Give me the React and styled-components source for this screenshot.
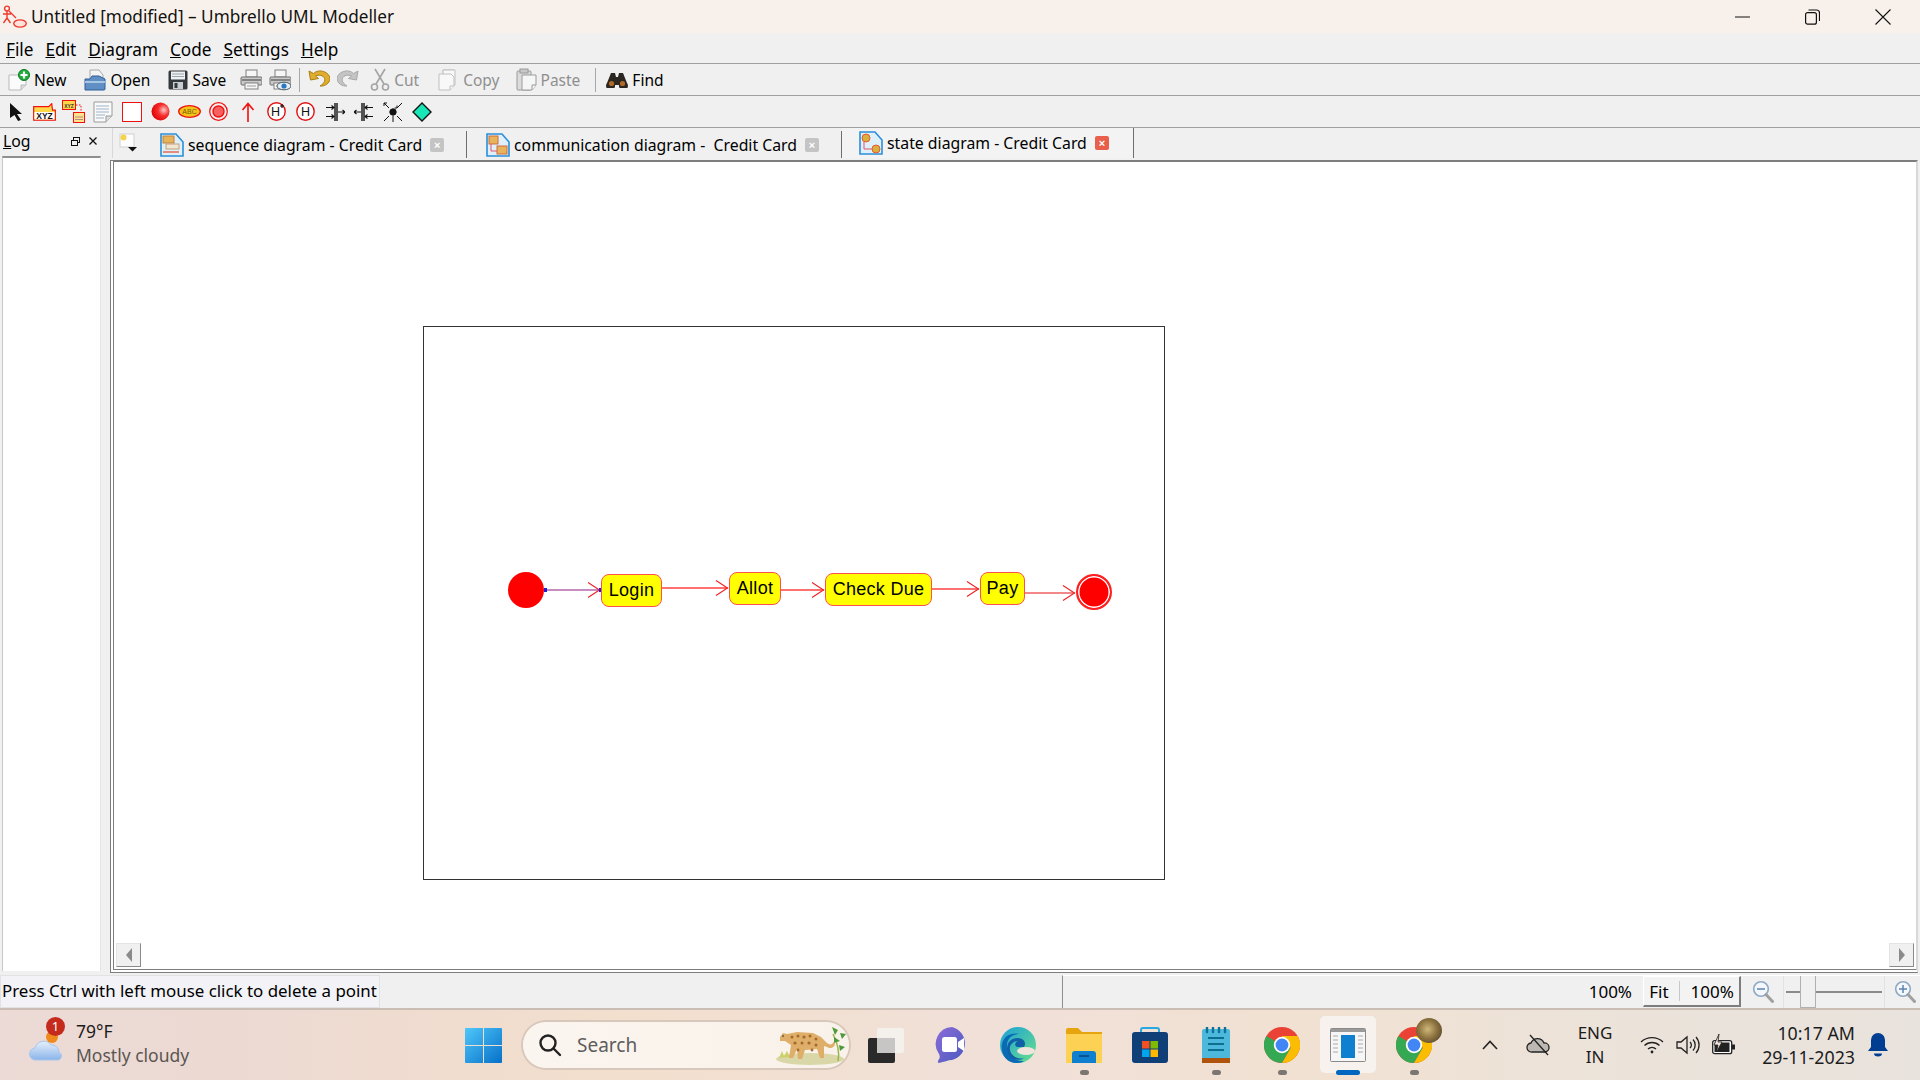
import React from 'react'
import styled, { createGlobalStyle } from 'styled-components'

const GlobalStyle = createGlobalStyle`
  html, body { margin: 0; padding: 0; background: #f0f0f0; }
  #root { width: 1920px; height: 1080px; overflow: hidden; }
  * { box-sizing: border-box; }
  svg { display: block; flex: none; }
`

const Page = styled.div`
  width: 1920px;
  height: 1080px;
  display: flex;
  flex-direction: column;
  font-family: "Noto Sans", sans-serif;
  font-size: 15.8px;
  color: #000;
  background: #f0f0f0;
`

/* title bar */
const TitleBar = styled.div`
  height: 33px;
  flex: none;
  display: flex;
  align-items: center;
  background: #f8f1eb;
  padding-left: 2px;
`
const TitleText = styled.span`
  font-size: 17.2px;
  margin-left: 4px;
  color: #111;
`
const WindowButtons = styled.div`
  margin-left: auto;
  display: flex;
  align-items: center;
  padding-right: 29px;
  gap: 55px;
`

/* menu + toolbars */
const MenuBar = styled.div`
  height: 31px;
  flex: none;
  display: flex;
  align-items: center;
  gap: 12px;
  padding: 2px 0 0 6px;
  border-bottom: 1px solid #a0a0a0;
  font-size: 17.2px;
`
const Bar = styled.div`
  height: 32px;
  flex: none;
  display: flex;
  align-items: center;
  padding-left: ${p => p.$pad || 0}px;
  border-bottom: 1px solid #a0a0a0;
  font-size: 15.5px;
`
const ToolButton = styled.div`
  display: flex;
  align-items: center;
  gap: 4px;
  margin-right: ${p => p.$after ?? 18}px;
  color: ${p => (p.$off ? '#8f8f8f' : '#000')};
`
const ToolSep = styled.div`
  width: 1px;
  height: 24px;
  background: #a8a8a8;
  margin: 0 ${p => p.$right ?? 8}px 0 0;
`
const IconCell = styled.div`
  width: 29px;
  height: 30px;
  display: flex;
  align-items: center;
  justify-content: center;
`

/* body */
const Main = styled.div`
  flex: 1;
  min-height: 0;
  display: flex;
`
const LogDock = styled.div`
  width: 102px;
  flex: none;
  display: flex;
  flex-direction: column;
`
const LogHead = styled.div`
  height: 28px;
  display: flex;
  align-items: center;
  padding: 0 5px 2px 3px;
`
const LogActions = styled.div`
  margin-left: auto;
  display: flex;
  align-items: center;
  gap: 9px;
`
const LogBody = styled.div`
  flex: 1;
  margin: 0 1px 2px 2px;
  background: #fff;
  border-top: 2px solid #8f8f8f;
  border-left: 1px solid #c8c8c8;
  border-right: 1px solid #e4e4e4;
`
const Work = styled.div`
  flex: 1;
  min-width: 0;
  display: flex;
  flex-direction: column;
  margin-left: 10px;
  padding-right: 2px;
`
const TabStrip = styled.div`
  height: 32px;
  flex: none;
  display: flex;
  align-items: flex-end;
  padding-bottom: 2px;
`
const TabMenu = styled.div`
  width: 32px;
  height: 30px;
  display: flex;
  align-items: center;
  justify-content: center;
  border-left: 1px solid #d8d8d8;
`
const Tab = styled.div`
  width: ${p => p.$w}px;
  height: ${p => (p.$active ? 30 : 27)}px;
  display: flex;
  align-items: center;
  padding-left: ${p => p.$pad}px;
  gap: 4px;
  border-right: 1px solid #6e6e6e;
  background: ${p => (p.$active ? '#f3f3f3' : '#f0f0f0')};
  white-space: pre;
`
const TabClose = styled.div`
  width: 14px;
  height: 14px;
  margin-left: 4px;
  border-radius: 2px;
  background: ${p => (p.$active ? '#e8604c' : '#c4c4c4')};
  color: #fff;
  font: bold 11px/14px "Liberation Sans", sans-serif;
  text-align: center;
`
const Canvas = styled.div`
  flex: 1;
  min-height: 0;
  margin-left: -2px;
  display: flex;
  flex-direction: column;
  background: #fff;
  border-top: 2px solid #7d7d7d;
  border-right: 2px solid #d8d8d8;
  border-left: 4px double #7d7d7d;
  border-bottom: 4px double #7d7d7d;
`
const Viewport = styled.div`
  flex: 1;
  min-height: 0;
  padding: 164px 0 0 309px;
`
const ScrollRow = styled.div`
  height: 26px;
  flex: none;
  display: flex;
  justify-content: space-between;
  padding: 0 2px 1px 2px;
`
const ScrollButton = styled.div`
  width: 25px;
  height: 24px;
  background: #f0f0f0;
  border: 1px solid #e4e4e4;
  border-right: 1px solid #8a8a8a;
  border-bottom: 1px solid #8a8a8a;
  display: flex;
  align-items: center;
  justify-content: center;
`

/* the state diagram: a free canvas */
const DiagramFrame = styled.div`
  position: relative;
  width: 742px;
  height: 554px;
  border: 1px solid #333;
  font-family: "Liberation Sans", sans-serif;
`
const Wires = styled.svg`
  position: absolute;
  left: 0;
  top: 0;
`
const StateNode = styled.div`
  position: absolute;
  left: ${p => p.$x}px;
  top: ${p => p.$y}px;
  width: ${p => p.$w}px;
  height: 33px;
  border: 1.5px solid #ff5050;
  border-radius: 8px;
  background: #ffff00;
  font-size: 18px;
  letter-spacing: .3px;
  line-height: 31px;
  text-align: center;
`
const InitialDot = styled.div`
  position: absolute;
  left: ${p => p.$x}px;
  top: ${p => p.$y}px;
  width: 36px;
  height: 36px;
  border-radius: 50%;
  background: #ff0000;
`
const FinalDot = styled(InitialDot)`
  border: 2px solid #ff2020;
  background: #ff0000;
  box-shadow: inset 0 0 0 1.5px #fff;
`

/* status bar */
const StatusBar = styled.div`
  height: 35px;
  flex: none;
  display: flex;
  align-items: center;
  padding-top: 1px;
  background: #f0f0f0;
  font-size: 17px;
`
const StatusMessage = styled.div`
  width: 380px;
  height: 33px;
  line-height: 29px;
  padding-left: 1px;
  background: #f3f3f7;
  border: 1px solid #e2e2e2;
  font-size: 16.9px;
  white-space: nowrap;
`
const StatusFill = styled.div`
  flex: 1;
  height: 33px;
  margin-left: 682px;
  border-left: 1px solid #8f8f8f;
  border-top: 1px solid #fff;
  display: flex;
  align-items: center;
  justify-content: flex-end;
  padding-right: 4px;
`
const ZoomValue = styled.span`
  margin-right: 11px;
`
const ZoomBox = styled.div`
  width: 98px;
  height: 31px;
  display: flex;
  align-items: center;
  justify-content: space-around;
  background: #f3f3f3;
  border-top: 1px solid #fff;
  border-left: 1px solid #fff;
  border-right: 2px solid #7d7d7d;
  border-bottom: 2px solid #7d7d7d;
  flex: none;
  margin-right: 11px;
`
const ZoomDivider = styled.div`
  width: 1px;
  height: 20px;
  background: #c8c8c8;
`
const SliderWell = styled.div`
  position: relative;
  width: 102px;
  height: 32px;
  margin: 0 9px 0 9px;
  border-left: 1px solid #e2e2e2;
  border-right: 1px solid #e2e2e2;
  display: flex;
  align-items: center;
`
const SliderTrack = styled.div`
  width: 100%;
  height: 2px;
  margin: 0 2px;
  background: #8a8a8a;
`
const SliderThumb = styled.div`
  position: absolute;
  left: 16px;
  top: 0;
  width: 16px;
  height: 32px;
  background: #f0f0f0;
  border: 1px solid #b0b0b0;
  border-top: 0;
`

/* taskbar */
const Taskbar = styled.div`
  height: 72px;
  flex: none;
  display: flex;
  align-items: center;
  border-top: 2px solid #c9bdb4;
  background: linear-gradient(90deg, #ecdad6 0%, #ecd9d2 12%, #f3dfcd 32%, #f0e0d8 52%, #f1e1d2 68%, #ebe3da 85%, #e9e3dd 100%);
`
const Weather = styled.div`
  position: relative;
  width: 450px;
  height: 100%;
  flex: none;
  display: flex;
  align-items: center;
  padding-left: 29px;
  gap: 11px;
`
const WeatherBadge = styled.div`
  position: absolute;
  left: 46px;
  top: 7px;
  width: 19px;
  height: 19px;
  border-radius: 50%;
  background: #c42b1c;
  color: #fff;
  font-size: 13px;
  line-height: 19px;
  text-align: center;
`
const WeatherText = styled.div`
  display: flex;
  flex-direction: column;
  font-size: 17.5px;
  line-height: 24px;
  margin-top: -4px;
  color: #1c1c1c;
`
const WeatherSub = styled.span`
  color: #5a5652;
`
const Slot = styled.div`
  position: relative;
  width: 66px;
  height: 100%;
  flex: none;
  display: flex;
  align-items: center;
  justify-content: center;
`
const ActiveBox = styled.div`
  position: absolute;
  left: 5px;
  top: 6px;
  width: 56px;
  height: 57px;
  border-radius: 5px;
  background: #f7f2ee;
`
const ActiveIcon = styled.div`
  position: relative;
`
const RunDot = styled.div`
  position: absolute;
  left: 50%;
  bottom: 5px;
  width: ${p => (p.$active ? 24 : 9)}px;
  height: 5px;
  margin-left: ${p => (p.$active ? -12 : -4)}px;
  border-radius: 3px;
  background: ${p => (p.$active ? '#0067c0' : '#7b7671')};
`
const SearchPill = styled.div`
  width: 326px;
  height: 46px;
  flex: none;
  margin: 0 4px 0 7px;
  display: flex;
  align-items: center;
  padding: 0 0 0 15px;
  gap: 15px;
  border-radius: 23px;
  background: linear-gradient(90deg, #fbf5ef, #f9f2ea);
  box-shadow: 0 0 0 2px #d8c8bc;
  font-size: 19px;
  color: #5d5d5d;
`
const SearchArt = styled.div`
  margin-left: auto;
  margin-right: 1px;
`
const Tray = styled.div`
  margin-left: ${p => p.$ml || 0}px;
  width: ${p => p.$w}px;
  height: 100%;
  flex: none;
  display: flex;
  align-items: center;
  justify-content: center;
`
const LangBox = styled.div`
  font-size: 17px;
  line-height: 24px;
  text-align: center;
  color: #1c1c1c;
`
const Clock = styled.div`
  width: 113px;
  flex: none;
  font-size: 17.8px;
  line-height: 24px;
  text-align: right;
  color: #1c1c1c;
  white-space: nowrap;
`

/* ---- icons ---- */
const AppLogo = () => (
  <svg width="25" height="24" viewBox="0 0 25 24" fill="none" stroke="#f03a2e" strokeWidth="1.4">
    <circle cx="5" cy="3.5" r="2.4" />
    <path d="M5 6v7M1 9h8M5 13l-3.5 5M5 13l3.5 5M7 6l7 7" />
    <ellipse cx="18" cy="18.5" rx="6.3" ry="3.6" fill="#fde3dc" />
  </svg>
)
const MinIcon = () => <svg width="15" height="15"><path d="M0 8h15" stroke="#111" strokeWidth="1" /></svg>
const RestoreIcon = () => (
  <svg width="15" height="16" fill="none" stroke="#111" strokeWidth="1.2">
    <rect x=".6" y="3.6" width="10.8" height="11.6" rx="2" />
    <path d="M3.5 1h8a3 3 0 0 1 3 3v8" />
  </svg>
)
const CloseIcon = () => <svg width="16" height="16"><path d="M.5.5l15 15M15.5.5l-15 15" stroke="#111" strokeWidth="1.1" /></svg>

const NewIcon = () => (
  <svg width="22" height="22">
    <path d="M1 6h12l5 3v7l-5 5H1z" fill="#fbfbfb" stroke="#b9b9b9" />
    <path d="M13 21v-5h5" fill="#ddd" stroke="#b9b9b9" />
    <circle cx="16" cy="6" r="5.5" fill="#1fae3c" stroke="#0b7a22" />
    <path d="M16 2.5v7M12.5 6h7" stroke="#fff" strokeWidth="2.2" />
  </svg>
)
const OpenIcon = () => (
  <svg width="22" height="22">
    <path d="M6 1h9l4 5v8H6z" fill="#f4f4f4" stroke="#a8a8a8" />
    <path d="M1 10h5l2-3h7l6 3v10a1 1 0 0 1-1 1H1z" fill="#5f8fc4" stroke="#2f5f95" />
    <path d="M1 13h20" stroke="#a9c6e4" strokeWidth="2" />
  </svg>
)
const SaveIcon = () => (
  <svg width="20" height="20">
    <rect x=".5" y=".5" width="19" height="19" rx="1.5" fill="#34383d" />
    <rect x="3" y="1.5" width="14" height="8" fill="#eef1f4" />
    <path d="M4 4h12M4 6.500h12" stroke="#9aa4ad" />
    <rect x="5" y="12" width="10" height="7" fill="#c6ccd2" />
    <rect x="6.500" y="13" width="3" height="5" fill="#34383d" />
  </svg>
)
const PrintIcon = ({ eye }) => (
  <svg width="22" height="22">
    <rect x="6" y="1" width="11" height="7" fill="#f6f6f6" stroke="#808080" />
    <rect x="1" y="8" width="21" height="8" rx="1" fill="#c9c9c9" stroke="#707070" />
    <path d="M2 11h19" stroke="#6a6a6a" strokeWidth="1.5" />
    <rect x="5" y="14" width="13" height="6" fill="#f6f6f6" stroke="#808080" />
    <path d="M7 17h9" stroke="#9b9b9b" />
    {eye && (
      <g>
        <ellipse cx="15" cy="17" rx="7" ry="3.800" fill="#e9eef3" stroke="#4a5a6a" />
        <circle cx="15" cy="17" r="2.600" fill="#2a79c0" />
      </g>
    )}
  </svg>
)
const UndoIcon = ({ color = '#e0ad2e', edge = '#a87f16', flip }) => (
  <svg width="22" height="20" viewBox="0 0 22 20">
    <g transform={flip ? 'translate(22 0) scale(-1 1)' : undefined}>
      <path d="M1 1l1.500 9 8-1.500-3-2.500c3-1.500 8-1 9 2.500 1 3-1.500 6-4.500 7.500 5 .5 10-3 10-7.500C21.500 2 11 -2 5.500 3.500z" fill={color} stroke={edge} />
    </g>
  </svg>
)
const CutIcon = () => (
  <svg width="20" height="23" fill="none" stroke="#a4a4a4">
    <path d="M5 1l9 15M15 1L6 16" strokeWidth="1.600" />
    <circle cx="4.500" cy="19" r="3" strokeWidth="1.600" />
    <circle cx="15.500" cy="19" r="3" strokeWidth="1.600" />
  </svg>
)
const CopyIcon = () => (
  <svg width="21" height="22" fill="#f8f8f8" stroke="#c0c0c0">
    <path d="M5 1h11v3h-11z" />
    <path d="M5 1h12v15H5z" />
    <path d="M1 5h12l3 3v9l-4 4H1z" />
    <path d="M12 21v-4h4" />
  </svg>
)
const PasteIcon = () => (
  <svg width="21" height="23" fill="#f6f6f6" stroke="#9a9a9a">
    <rect x="1" y="3" width="14" height="19" rx="1" fill="#dcdcdc" />
    <rect x="4" y="1" width="8" height="4" fill="#c8c8c8" />
    <path d="M6 7h14v10l-4 5H6z" />
    <path d="M16 22v-5h4" />
  </svg>
)
const FindIcon = () => (
  <svg width="22" height="16">
    <path d="M5 1h4l1 4h2l1-4h4l4 10a4.500 4.500 0 1 1-8 2h-4a4.500 4.500 0 1 1-8-2z" fill="#2c2620" />
    <circle cx="5.500" cy="11.500" r="2.600" fill="#b06a28" />
    <circle cx="16.500" cy="11.500" r="2.600" fill="#b06a28" />
  </svg>
)

const CursorIcon = () => (
  <svg width="14" height="18"><path d="M1 0l12 11H8l4 6-3 1-3.500-6L1 15z" fill="#111" /></svg>
)
const XyzIcon = () => (
  <svg width="23" height="18">
    <path d="M.7 3.700h15l3-3 .8 6.500 2.800 0v10H.7z" fill="#ffd84a" stroke="#f01010" strokeWidth="1.200" />
    <rect x="1.500" y="9" width="20" height="7.500" fill="#fff" />
    <text x="11.500" y="15.500" textAnchor="middle" fontFamily="Liberation Sans" fontWeight="700" fontSize="8.500" fill="#111">XYZ</text>
  </svg>
)
const SubStateIcon = () => (
  <svg width="23" height="23">
    <rect x=".5" y=".5" width="13" height="9" fill="#ffd84a" stroke="#f01010" />
    <text x="7" y="8" textAnchor="middle" fontFamily="Liberation Sans" fontWeight="700" fontSize="5" fill="#333">XYZ</text>
    <path d="M14 5h5v8" fill="none" stroke="#f01010" strokeDasharray="1.500 1.500" />
    <rect x="11.500" y="12.500" width="11" height="10" fill="#ffe38a" stroke="#f01010" />
    <path d="M13 17h8M13 19.500h8" stroke="#b88" />
  </svg>
)
const NoteIcon = () => (
  <svg width="20" height="22">
    <path d="M1 1h18v14l-6 6H1z" fill="#fafafa" stroke="#9a9a9a" />
    <path d="M13 21v-6h6" fill="#ddd" stroke="#9a9a9a" />
    <path d="M3 5h13M3 8h13M3 11h13M3 14h9M3 17h8" stroke="#9fb3c8" />
  </svg>
)
const SquareIcon = () => <svg width="20" height="20"><rect x=".5" y=".5" width="19" height="19" fill="#fff" stroke="#f01010" /></svg>
const RoundIcon = () => (
  <svg width="19" height="19">
    <defs>
      <radialGradient id="rg" cx=".68" cy=".42" r=".7">
        <stop offset="0" stopColor="#ffc8c8" />
        <stop offset=".45" stopColor="#f53030" />
        <stop offset="1" stopColor="#e00000" />
      </radialGradient>
    </defs>
    <circle cx="9.500" cy="9.500" r="9" fill="url(#rg)" />
  </svg>
)
const AbcIcon = () => (
  <svg width="23" height="13">
    <ellipse cx="11.500" cy="6.500" rx="10.800" ry="5.800" fill="#f2c418" stroke="#f01010" strokeWidth="1.300" />
    <text x="11.500" y="9" textAnchor="middle" fontFamily="Liberation Sans" fontSize="7" fill="#7a5a00">ABC</text>
  </svg>
)
const TargetIcon = () => (
  <svg width="19" height="19" fill="none" stroke="#f01010">
    <circle cx="9.500" cy="9.500" r="8.800" strokeWidth="1.200" />
    <circle cx="9.500" cy="9.500" r="5.500" fill="#f76060" strokeWidth="1.400" />
  </svg>
)
const UpIcon = () => (
  <svg width="14" height="20" fill="none" stroke="#f01010" strokeWidth="1.600">
    <path d="M7 20V2M1.500 8L7 1.500 12.500 8" />
  </svg>
)
const HistoryIcon = ({ deep }) => (
  <svg width="19" height="19">
    <circle cx="9.500" cy="9.500" r="8.700" fill="#fff" stroke="#e01010" strokeWidth="1.400" />
    <text x={deep ? 8.500 : 9.500} y="14" textAnchor="middle" fontFamily="Liberation Sans" fontSize="12.500" fill="#111">H</text>
    {deep && <path d="M15 2v4M13 4h4" stroke="#111" strokeWidth="1.200" />}
  </svg>
)
const ForkIcon = ({ flip }) => (
  <svg width="20" height="18" fill="none" stroke="#111" strokeWidth="1.100">
    <g transform={flip ? 'translate(20 0) scale(-1 1)' : undefined}>
      <path d="M10 0v18M12 0v18" strokeWidth="1.400" />
      <path d="M1 4.500h8M1 13.500h8M6.500 2.500l2.500 2-2.500 2M6.500 11.500l2.500 2-2.500 2M13 9h7M17.500 7l2.500 2-2.500 2" />
    </g>
  </svg>
)
const JunctionIcon = () => (
  <svg width="20" height="20" fill="none" stroke="#111">
    <circle cx="10" cy="10" r="3.200" fill="#111" />
    <path d="M1 1l5 5M19 1l-5 5M1 19l5-5M19 19l-5-5M10 14v6M1 1h3M1 1v3M14 6h-2.500M14 6V3.500" />
  </svg>
)
const DiamondIcon = () => (
  <svg width="20" height="20"><path d="M10 1l9 9-9 9-9-9z" fill="#18e8b8" stroke="#111" strokeWidth="1.400" /></svg>
)
const FloatIcon = () => (
  <svg width="9" height="9" fill="#f0f0f0" stroke="#111">
    <rect x="2.500" y=".5" width="6" height="5" />
    <rect x=".5" y="3.500" width="6" height="5" />
  </svg>
)
const LogClose = () => <svg width="8" height="8"><path d="M.5.5l7 7M7.500.5l-7 7" stroke="#111" strokeWidth="1.300" /></svg>
const TabListIcon = () => (
  <svg width="20" height="20">
    <rect x="1" y="1" width="14" height="13" fill="#fdfdfd" stroke="#d0d0d0" />
    <circle cx="4.500" cy="4.500" r="3" fill="#f4d44a" />
    <path d="M9 14h9l-4.500 4.500z" fill="#111" />
  </svg>
)
const DocIcon = ({ kind }) => (
  <svg width="24" height="24">
    <path d="M1 1h15l7 8v14H1z" fill="#dff0fb" stroke="#2b8fd8" strokeWidth="1.600" />
    {kind === 'seq' && (
      <g>
        <rect x="3" y="3" width="11" height="7" fill="#e8b45a" stroke="#c0813a" />
        <rect x="6" y="11" width="13" height="5" fill="#f2e6d0" stroke="#c0a080" />
        <path d="M3 19h16" stroke="#e86a50" strokeWidth="1.500" />
      </g>
    )}
    {kind === 'com' && (
      <g>
        <rect x="3" y="3" width="9" height="8" fill="#e8b45a" stroke="#d06a40" />
        <rect x="11" y="13" width="10" height="8" fill="#e8b45a" stroke="#d06a40" />
        <path d="M5 11v7h6" fill="none" stroke="#e8506a" />
      </g>
    )}
    {kind === 'state' && (
      <g>
        <circle cx="7" cy="7" r="4" fill="#d8b040" stroke="#e85a30" />
        <circle cx="17" cy="18" r="4" fill="#d8b040" stroke="#e85a30" />
        <path d="M5 11v7h8" fill="none" stroke="#e8506a" />
      </g>
    )}
  </svg>
)
const LeftTri = ({ right }) => (
  <svg width="8" height="14"><path d={right ? 'M1 0l6 7-6 7z' : 'M7 0L1 7l6 7z'} fill="#8a8a8a" /></svg>
)
const Magnifier = ({ plus }) => (
  <svg width="22" height="24" fill="none">
    <circle cx="9" cy="9" r="7.300" fill="#f4f8fc" stroke="#8fa9c4" strokeWidth="1.600" />
    <path d={plus ? 'M5 9h8M9 5v8' : 'M5 9h8'} stroke="#5a84b0" strokeWidth="1.500" />
    <path d="M14 14.500l6.500 7" stroke="#a0a0a0" strokeWidth="3" strokeLinecap="round" />
  </svg>
)

const CloudIcon = () => (
  <svg width="36" height="36">
    <defs>
      <linearGradient id="cl" x1="0" y1="0" x2="0" y2="1">
        <stop offset="0" stopColor="#e6f0fb" />
        <stop offset="1" stopColor="#8ab4ea" />
      </linearGradient>
    </defs>
    <circle cx="23" cy="10" r="6" fill="#f08a1d" />
    <path d="M7 33a6 6 0 0 1-1-12 9 9 0 0 1 16-3 7 7 0 0 1 8 7 4.500 4.500 0 0 1 0 8z" fill="url(#cl)" stroke="#a8c6ee" />
  </svg>
)
const WindowsLogo = () => (
  <svg width="37" height="35">
    <defs>
      <linearGradient id="wn" x1="0" y1="0" x2="1" y2="1">
        <stop offset="0" stopColor="#4fc7fa" />
        <stop offset="1" stopColor="#0670c8" />
      </linearGradient>
    </defs>
    <path d="M0 1a1 1 0 0 1 1-1h17v17H0zM19 0h17a1 1 0 0 1 1 1v16H19zM0 18h18v17H1a1 1 0 0 1-1-1zM19 18h18v16a1 1 0 0 1-1 1H19z" fill="url(#wn)" />
  </svg>
)
const SearchGlass = () => (
  <svg width="24" height="24" fill="none" stroke="#222" strokeWidth="2.400">
    <circle cx="10" cy="10" r="7.500" />
    <path d="M15.500 15.500L22 22" strokeLinecap="round" />
  </svg>
)
const Jaguar = () => (
  <svg width="74" height="40" viewBox="0 0 74 40">
    <ellipse cx="36" cy="34" rx="34" ry="6" fill="#d9d7a8" />
    <path d="M5 33l3-7 2 5 3-5 3 6z" fill="#cdd06a" />
    <path d="M64 36c2-9 0-17-5-27" fill="none" stroke="#9ab24a" strokeWidth="1.500" />
    <path d="M58 2l6 3-3 5zM66 8l6 1-4 5zM60 12l6 4-6 2zM65 20l6 2-5 4z" fill="#4c9a3a" />
    <path d="M6 12l3-4 4 1 10-2 16 1 8 4 6 6c2 2 6 2 6-1l2 1c0 5-5 6-8 4l-3-1v12h-4l-3-9-12 1-3 9h-4l-1-10-4 9h-4l2-13-6-4-5 0z" fill="#dfae68" />
    <g fill="#a6692c">
      <circle cx="18" cy="12" r="1.500" /><circle cx="24" cy="11" r="1.500" /><circle cx="30" cy="12" r="1.600" />
      <circle cx="36" cy="11" r="1.500" /><circle cx="42" cy="14" r="1.500" /><circle cx="21" cy="18" r="1.600" />
      <circle cx="28" cy="18" r="1.500" /><circle cx="35" cy="18" r="1.600" /><circle cx="42" cy="20" r="1.500" />
      <circle cx="24" cy="25" r="1.400" /><circle cx="38" cy="25" r="1.400" />
    </g>
    <circle cx="9" cy="11" r=".8" fill="#222" />
  </svg>
)
const TaskViewIcon = () => (
  <svg width="36" height="35">
    <rect x="0" y="10" width="27" height="25" rx="2" fill="#2a2a2a" />
    <rect x="9" y="0" width="27" height="25" rx="2" fill="#f4f2ee" fillOpacity=".93" />
    <rect x="9" y="10" width="18" height="15" fill="#c8c6c4" />
  </svg>
)
const MeetIcon = () => (
  <svg width="34" height="36">
    <defs>
      <linearGradient id="mt" x1="0" y1="0" x2="1" y2="1">
        <stop offset="0" stopColor="#8c6cd8" />
        <stop offset="1" stopColor="#4a5ac0" />
      </linearGradient>
    </defs>
    <path d="M17 0a17 17 0 0 1 0 33c-4 0-8 2-13 3-2 0-1-2 0-4 1-1 1-3 0-5A17 17 0 0 1 17 0z" fill="url(#mt)" />
    <rect x="7" y="10" width="15" height="15" rx="2.500" fill="#fff" />
    <path d="M23 15l6-4v13l-6-4z" fill="#fff" />
  </svg>
)
const EdgeIcon = () => (
  <svg width="37" height="36">
    <defs>
      <linearGradient id="eg" x1="0" y1="0" x2="1" y2="1">
        <stop offset="0" stopColor="#1aa0d8" />
        <stop offset="1" stopColor="#6ae08a" />
      </linearGradient>
    </defs>
    <circle cx="18" cy="18" r="18" fill="url(#eg)" />
    <path d="M2 17C4 8 12 5 20 7c-8 0-14 5-13 14 1 8 8 13 17 13-3 2-6 2-8 2C7 36 0 27 2 17z" fill="#0a6ab4" />
    <path d="M7 22C7 12 16 9 22 12c3 2 4 5 2 8h-7c-3-1-2-5 1-6-5 0-9 4-8 9 1 6 8 10 15 8-9 5-18-1-18-9z" fill="#1060a8" />
    <ellipse cx="26" cy="24" rx="9" ry="4" fill="#f0e4dc" />
  </svg>
)
const FolderIcon = () => (
  <svg width="36" height="35">
    <path d="M0 2a2 2 0 0 1 2-2h10l4 4h20v30H0z" fill="#e6a50f" />
    <path d="M0 6h36v29H0z" fill="#fcd154" />
    <path d="M6 35V26a3 3 0 0 1 3-3h18a3 3 0 0 1 3 3v9z" fill="#0f7fd0" />
    <path d="M13 28h10" stroke="#0a508a" strokeWidth="1.800" />
  </svg>
)
const StoreIcon = () => (
  <svg width="36" height="36">
    <path d="M9 9V3a2 2 0 0 1 2-2h14a2 2 0 0 1 2 2v6" fill="none" stroke="#28a8e0" strokeWidth="2" />
    <rect x="0" y="5" width="36" height="31" rx="3" fill="#103f78" />
    <rect x="10" y="14" width="7.500" height="7.500" fill="#f25022" />
    <rect x="18.500" y="14" width="7.500" height="7.500" fill="#7fba00" />
    <rect x="10" y="22.500" width="7.500" height="7.500" fill="#00a4ef" />
    <rect x="18.500" y="22.500" width="7.500" height="7.500" fill="#ffb900" />
  </svg>
)
const NotepadIcon = () => (
  <svg width="29" height="36">
    <rect x="0" y="2" width="28" height="30" rx="2" fill="#4cb8dc" />
    <rect x="0" y="31" width="28" height="5" fill="#b0540c" />
    <path d="M5 0v5M11 0v5M17 0v5M23 0v5" stroke="#0f6f94" strokeWidth="2.400" strokeLinecap="round" />
    <path d="M6 11h16M6 17h16M6 23h16" stroke="#0d6f90" strokeWidth="2" />
  </svg>
)
const ChromeIcon = () => (
  <svg width="36" height="36" viewBox="0 0 36 36">
    <circle cx="18" cy="18" r="18" fill="#ea4335" />
    <path d="M18 18L2.400 9A18 18 0 0 0 18 36l9-15.600z" fill="#34a853" />
    <path d="M18 18l9 2.400L18 36a18 18 0 0 0 15.600-27H18z" fill="#fbbc04" />
    <circle cx="18" cy="18" r="8.200" fill="#fff" />
    <circle cx="18" cy="18" r="6.400" fill="#4285f4" />
  </svg>
)
const UmbrelloTask = () => (
  <svg width="36" height="34">
    <rect x=".5" y=".5" width="35" height="33" rx="1" fill="#f6f6f6" stroke="#8a8a8a" />
    <rect x="1" y="1" width="34" height="3" fill="#9a9a9a" />
    <rect x="11" y="7" width="14" height="23" fill="#0f7fd0" />
    <path d="M3 8h5M3 12h5M3 16h5M3 20h5M3 24h5M28 8h5M28 12h5M28 16h5M28 20h5M28 24h5" stroke="#c4c4c4" strokeWidth="1.500" />
  </svg>
)
const AvatarBadge = styled.div`
  position: absolute;
  left: 35px;
  top: 8px;
  width: 26px;
  height: 25px;
  border-radius: 50%;
  background: radial-gradient(circle at 45% 45%, #cfb87a 0%, #8f7440 45%, #3c3424 100%);
`
const ChevronIcon = () => <svg width="16" height="10"><path d="M1 9l7-7.500L15 9" fill="none" stroke="#222" strokeWidth="1.600" /></svg>
const OneDriveOff = () => (
  <svg width="24" height="22">
    <path d="M6 18a4.500 4.500 0 0 1-1-9 7 7 0 0 1 13 0 4.500 4.500 0 0 1 1 9z" fill="#bdb8b2" stroke="#222" strokeWidth="1.300" />
    <path d="M4 1l18 20" stroke="#222" strokeWidth="1.300" />
  </svg>
)
const WifiIcon = () => (
  <svg width="24" height="18" fill="none" stroke="#222" strokeWidth="1.400">
    <path d="M1 6a16 16 0 0 1 22 0M4.500 9.500a11 11 0 0 1 15 0M8 13a6 6 0 0 1 8 0" />
    <circle cx="12" cy="16" r="1.400" fill="#222" stroke="none" />
  </svg>
)
const VolumeIcon = () => (
  <svg width="24" height="20" fill="none" stroke="#222" strokeWidth="1.300">
    <path d="M1 7h4l6-5v16l-6-5H1z" />
    <path d="M14 7a4 4 0 0 1 0 6M17 4.500a8 8 0 0 1 0 11M20 2a12 12 0 0 1 0 16" />
  </svg>
)
const BatteryIcon = () => (
  <svg width="24" height="22">
    <rect x=".7" y="6.700" width="19" height="13" rx="2" fill="#fff" stroke="#222" strokeWidth="1.300" />
    <rect x="2.500" y="8.500" width="15" height="9.500" fill="#222" />
    <rect x="20" y="10.500" width="3" height="5" fill="#222" />
    <path d="M7 0L2 11h4l-1.500 7L10 8H6z" fill="#f1e4da" stroke="#222" strokeWidth=".8" />
  </svg>
)
const BellIcon = () => (
  <svg width="20" height="24">
    <path d="M10 0a7 7 0 0 1 7 7v7l3 4H0l3-4V7a7 7 0 0 1 7-7z" fill="#003e92" />
    <path d="M6 20.500h8a4 3 0 0 1-8 0z" fill="#003e92" />
  </svg>
)

const menus = [['F', 'ile'], ['E', 'dit'], ['D', 'iagram'], ['C', 'ode'], ['S', 'ettings'], ['H', 'elp']]

const wires = [
  { x1: 121, x2: 176, y: 263, color: '#c88cc0', width: 2 },
  { x1: 238, x2: 304, y: 261, color: '#ff7070', width: 2 },
  { x1: 357, x2: 400, y: 263, color: '#ff7070', width: 2 },
  { x1: 508, x2: 555, y: 262, color: '#ff7070', width: 2 },
  { x1: 601, x2: 651, y: 266, color: '#e81010', width: 1 }
]

export default function App () {
  return (
    <Page>
      <GlobalStyle />
      <TitleBar>
        <AppLogo />
        <TitleText>Untitled [modified] – Umbrello UML Modeller</TitleText>
        <WindowButtons>
          <MinIcon />
          <RestoreIcon />
          <CloseIcon />
        </WindowButtons>
      </TitleBar>

      <MenuBar>
        {menus.map(([key, rest]) => <span key={key}><u>{key}</u>{rest}</span>)}
      </MenuBar>

      <Bar $pad={8}>
        <ToolButton><NewIcon />New</ToolButton>
        <ToolButton><OpenIcon />Open</ToolButton>
        <ToolButton $after={14}><SaveIcon />Save</ToolButton>
        <ToolButton $after={7}><PrintIcon /></ToolButton>
        <ToolButton $after={8}><PrintIcon eye /></ToolButton>
        <ToolSep />
        <ToolButton $after={7}><UndoIcon /></ToolButton>
        <ToolButton $after={11}><UndoIcon color="#c4c4c4" edge="#a8a8a8" flip /></ToolButton>
        <ToolButton $off $after={19}><CutIcon />Cut</ToolButton>
        <ToolButton $off $after={16}><CopyIcon />Copy</ToolButton>
        <ToolButton $off $after={15}><PasteIcon />Paste</ToolButton>
        <ToolSep $right={10} />
        <ToolButton><FindIcon />Find</ToolButton>
      </Bar>

      <Bar $pad={1}>
        <IconCell><CursorIcon /></IconCell>
        <IconCell><XyzIcon /></IconCell>
        <IconCell><SubStateIcon /></IconCell>
        <IconCell><NoteIcon /></IconCell>
        <IconCell><SquareIcon /></IconCell>
        <IconCell><RoundIcon /></IconCell>
        <IconCell><AbcIcon /></IconCell>
        <IconCell><TargetIcon /></IconCell>
        <IconCell><UpIcon /></IconCell>
        <IconCell><HistoryIcon deep /></IconCell>
        <IconCell><HistoryIcon /></IconCell>
        <IconCell><ForkIcon /></IconCell>
        <IconCell><ForkIcon flip /></IconCell>
        <IconCell><JunctionIcon /></IconCell>
        <IconCell><DiamondIcon /></IconCell>
      </Bar>

      <Main>
        <LogDock>
          <LogHead>
            <span><u>L</u>og</span>
            <LogActions>
              <FloatIcon />
              <LogClose />
            </LogActions>
          </LogHead>
          <LogBody />
        </LogDock>
        <Work>
          <TabStrip>
            <TabMenu><TabListIcon /></TabMenu>
            <Tab $w={323} $pad={16}><DocIcon kind="seq" />sequence diagram - Credit Card<TabClose>×</TabClose></Tab>
            <Tab $w={375} $pad={19}><DocIcon kind="com" />communication diagram -  Credit Card<TabClose>×</TabClose></Tab>
            <Tab $w={292} $pad={17} $active><DocIcon kind="state" />state diagram - Credit Card<TabClose $active>×</TabClose></Tab>
          </TabStrip>
          <Canvas>
            <Viewport>
              <DiagramFrame>
                <Wires width="740" height="552">
                  <defs>
                    <marker id="openHead" markerUnits="userSpaceOnUse" markerWidth="14" markerHeight="18" refX="13" refY="9" orient="auto">
                      <path d="M1 1.500l11.500 7.500-11.500 7.500" fill="none" stroke="#f02020" strokeWidth="1.100" />
                    </marker>
                  </defs>
                  {wires.map(w => (
                    <line key={w.x1} x1={w.x1} x2={w.x2} y1={w.y} y2={w.y} stroke={w.color} strokeWidth={w.width} markerEnd="url(#openHead)" />
                  ))}
                  <rect x="120" y="261" width="3" height="4" fill="#2020d0" />
                  <rect x="175" y="261" width="2" height="4" fill="#2020d0" />
                </Wires>
                <InitialDot $x={84} $y={245} />
                <StateNode $x={177} $y={247} $w={61}>Login</StateNode>
                <StateNode $x={305} $y={245} $w={52}>Allot</StateNode>
                <StateNode $x={401} $y={246} $w={107}>Check Due</StateNode>
                <StateNode $x={556} $y={245} $w={45}>Pay</StateNode>
                <FinalDot $x={652} $y={247} />
              </DiagramFrame>
            </Viewport>
            <ScrollRow>
              <ScrollButton><LeftTri /></ScrollButton>
              <ScrollButton><LeftTri right /></ScrollButton>
            </ScrollRow>
          </Canvas>
        </Work>
      </Main>

      <StatusBar>
        <StatusMessage>Press Ctrl with left mouse click to delete a point</StatusMessage>
        <StatusFill>
          <ZoomValue>100%</ZoomValue>
          <ZoomBox>
            Fit
            <ZoomDivider />
            100%
          </ZoomBox>
          <Magnifier />
          <SliderWell>
            <SliderTrack />
            <SliderThumb />
          </SliderWell>
          <Magnifier plus />
        </StatusFill>
      </StatusBar>

      <Taskbar>
        <Weather>
          <CloudIcon />
          <WeatherBadge>1</WeatherBadge>
          <WeatherText>
            <span>79°F</span>
            <WeatherSub>Mostly cloudy</WeatherSub>
          </WeatherText>
        </Weather>
        <Slot><WindowsLogo /></Slot>
        <SearchPill>
          <SearchGlass />
          Search
          <SearchArt><Jaguar /></SearchArt>
        </SearchPill>
        <Slot><TaskViewIcon /></Slot>
        <Slot><MeetIcon /></Slot>
        <Slot><EdgeIcon /></Slot>
        <Slot><FolderIcon /><RunDot /></Slot>
        <Slot><StoreIcon /></Slot>
        <Slot><NotepadIcon /><RunDot /></Slot>
        <Slot><ChromeIcon /><RunDot /></Slot>
        <Slot>
          <ActiveBox />
          <ActiveIcon><UmbrelloTask /></ActiveIcon>
          <RunDot $active />
        </Slot>
        <Slot>
          <ChromeIcon />
          <AvatarBadge />
          <RunDot />
        </Slot>
        <Tray $ml={27} $w={32}><ChevronIcon /></Tray>
        <Tray $ml={8} $w={48}><OneDriveOff /></Tray>
        <Tray $ml={8} $w={50}><LangBox>ENG<br />IN</LangBox></Tray>
        <Tray $ml={14} $w={36}><WifiIcon /></Tray>
        <Tray $w={36}><VolumeIcon /></Tray>
        <Tray $w={36}><BatteryIcon /></Tray>
        <Clock>10:17 AM<br />29-11-2023</Clock>
        <Tray $w={45}><BellIcon /></Tray>
      </Taskbar>
    </Page>
  )
}
